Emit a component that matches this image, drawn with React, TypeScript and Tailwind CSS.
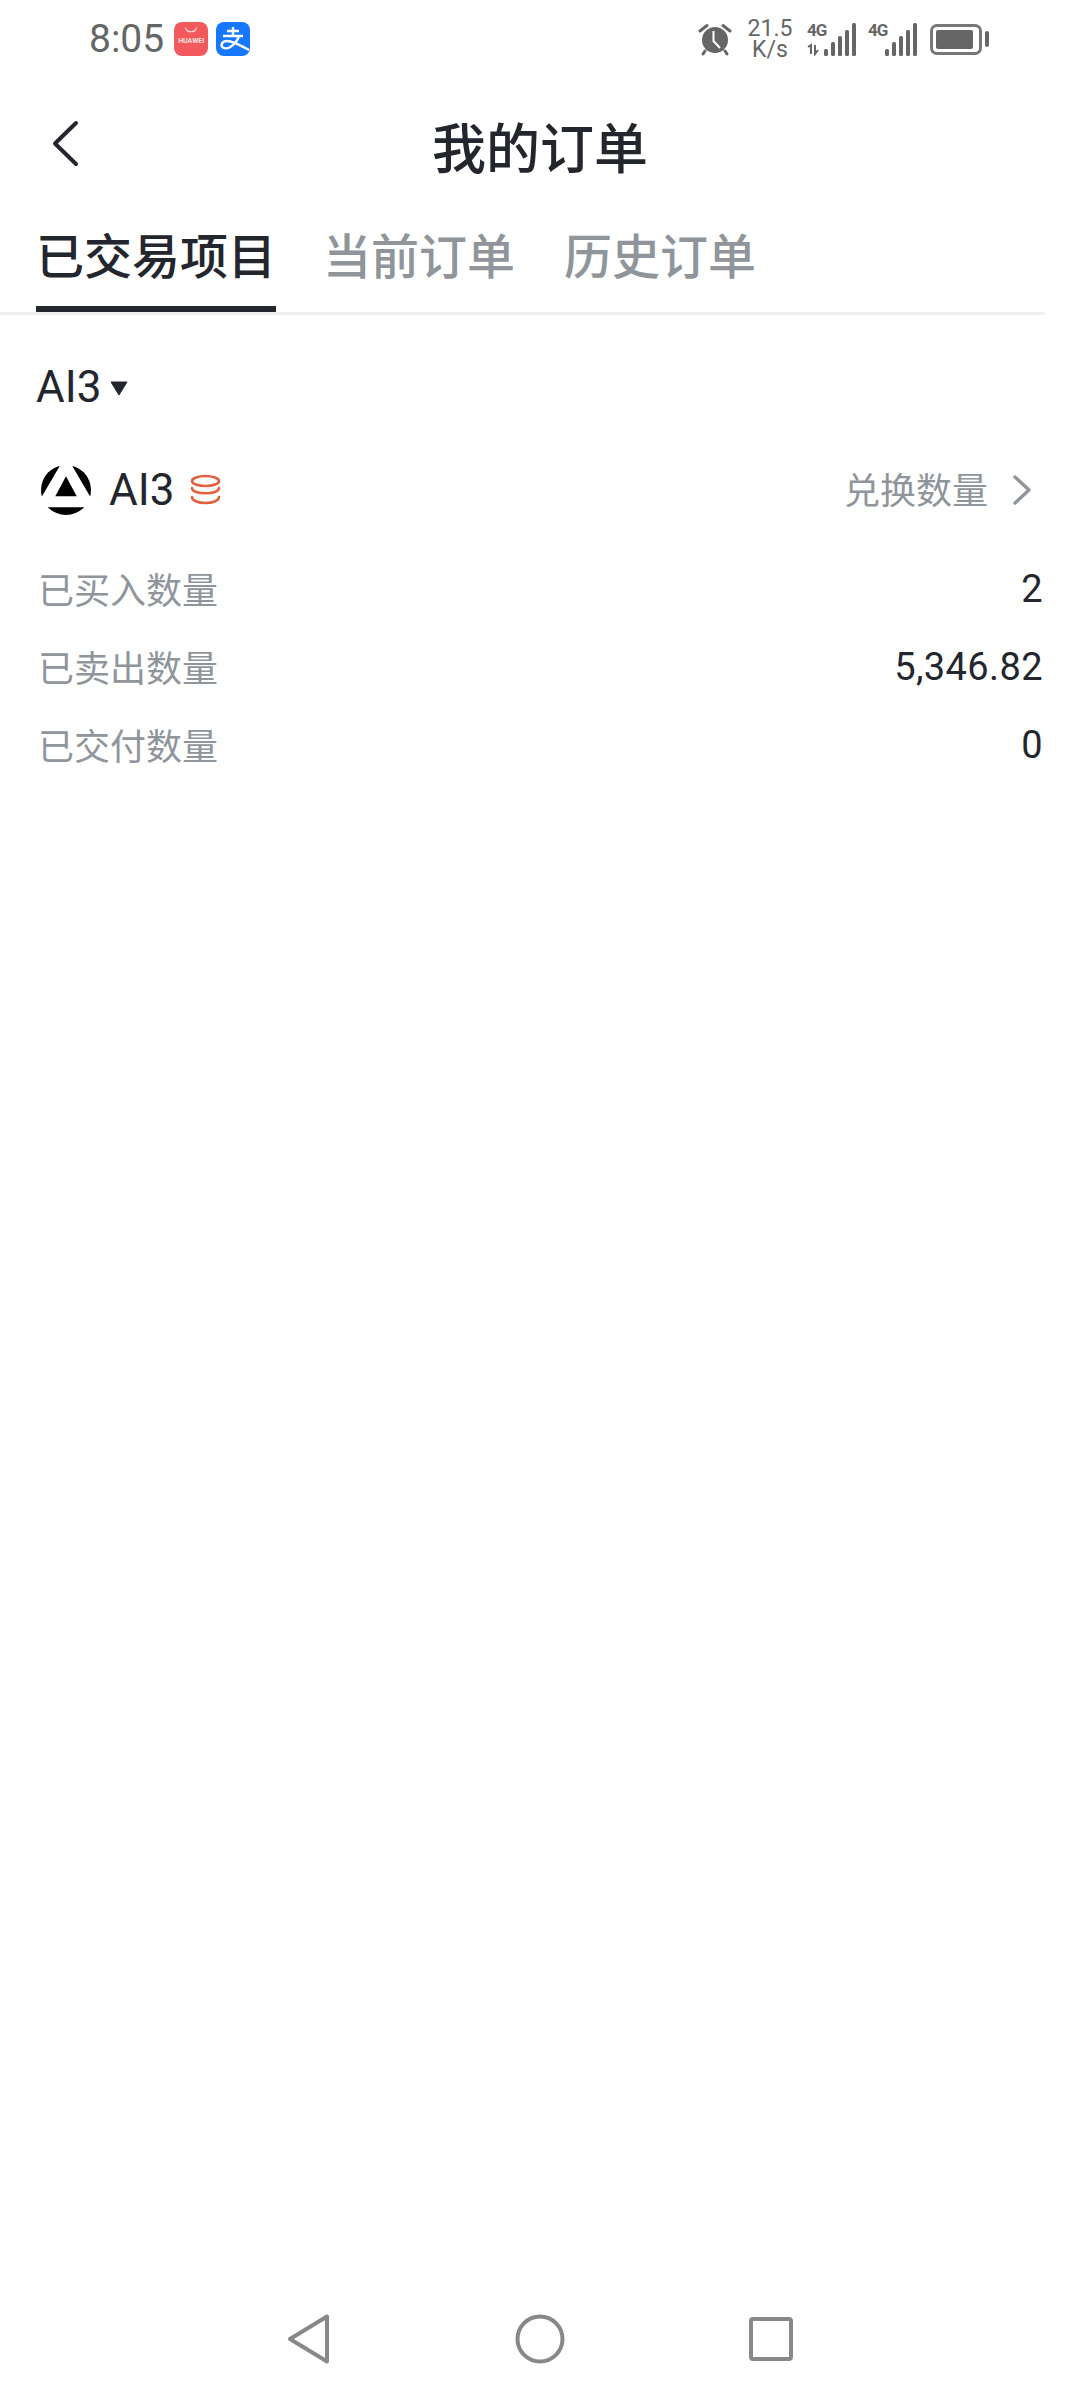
import React from "react";

const sans = "font-['Roboto','Noto_Sans_CJK_SC',sans-serif]";

const rows = [
  { label: "已买入数量", value: "2" },
  { label: "已卖出数量", value: "5,346.82" },
  { label: "已交付数量", value: "0" },
];

const HuaweiIcon = () => (
  <div className="w-[34px] h-[34px] rounded-[8px] bg-[#f2595d] flex flex-col items-center pt-[5px]">
    <svg width="14" height="7" viewBox="0 0 14 7" fill="none">
      <path d="M1.5 1C3 6 11 6 12.5 1" stroke="#ffd9d0" strokeWidth="1.2" strokeLinecap="round" />
    </svg>
    <span className="text-[7px] leading-[8px] mt-[3px] text-[#ffe3df] font-bold">HUAWEI</span>
  </div>
);

const AlipayIcon = () => (
  <svg width="34" height="34" viewBox="0 0 34 34">
    <rect width="34" height="34" rx="8" fill="#1677ff" />
    <path d="M11 9H23M17 5V14M7 14H27M23 14C21 21 13 28 8 26C3.5 24.5 5.5 19 11 19C17 19 24 23 33 28" fill="none" stroke="#fff" strokeWidth="2.4" />
  </svg>
);

const AlarmIcon = () => (
  <svg width="34" height="34" viewBox="0 0 34 34">
    <circle cx="17" cy="18" r="13" fill="#666" />
    <path d="M15.5 9V19L22 26" fill="none" stroke="#fff" strokeWidth="2" />
    <path d="M2 9L9 3.5M32 9L25 3.5M7 29L5 32M27 29L29 32" stroke="#666" strokeWidth="3" strokeLinecap="round" />
  </svg>
);

// network type label with five signal bars, the first slot shows traffic arrows when active
const SignalBars = ({ activity }: { activity?: boolean }) => (
  <div className="relative w-[50px] h-[33px] shrink-0">
    <span className="absolute left-0 top-[-2px] text-[17px] leading-[18px] font-bold tracking-[-1px] text-[#666]">4G</span>
    <svg className="absolute left-0 top-0" width="50" height="33" viewBox="0 0 50 33">
      {activity && <path d="M1 24L4 22V31M8 22V31L11 27" fill="none" stroke="#666" strokeWidth="2" />}
      <rect x="17" y="26" width="4" height="7" rx="1.5" fill="#666" />
      <rect x="24" y="19" width="4" height="14" rx="1.5" fill="#666" />
      <rect x="31" y="13" width="4" height="20" rx="1.5" fill="#666" />
      <rect x="38" y="7" width="4" height="26" rx="1.5" fill="#666" />
      <rect x="45" y="0" width="4" height="33" rx="1.5" fill="#666" />
    </svg>
  </div>
);

const Battery = () => (
  <div className="flex items-center gap-[3px]">
    <div className="w-[52px] h-[31px] rounded-[7px] border-[3px] border-[#777] p-[3px]">
      <div className="w-[37px] h-full rounded-[2px] bg-[#666]" />
    </div>
    <div className="w-[4px] h-[16px] rounded-full bg-[#666]" />
  </div>
);

const StatusBar = () => (
  <div className="h-[78px] pl-[89px] pr-[91px] flex items-center justify-between">
    <div className="flex items-center gap-[8px]">
      <span className="text-[39px] leading-[46px] text-[#666] mr-[2px]">8:05</span>
      <HuaweiIcon />
      <AlipayIcon />
    </div>
    <div className="flex items-center">
      <AlarmIcon />
      <div className="w-[46px] ml-[15px] mr-[14px] flex flex-col items-center text-[#666] text-[23px] leading-[21px]">
        <span>21.5</span>
        <span>K/s</span>
      </div>
      <SignalBars activity />
      <div className="w-[11px]" />
      <SignalBars />
      <div className="w-[12px]" />
      <Battery />
    </div>
  </div>
);

const CoinsIcon = () => (
  <svg width="31" height="32" viewBox="0 0 31 32" fill="none" stroke="#e2603f" strokeWidth="2.6" strokeLinecap="round">
    <ellipse cx="15.5" cy="7" rx="13.5" ry="5" />
    <path d="M2 14C2 21 29 21 29 14" />
    <path d="M2 23C2 31 29 31 29 23" />
  </svg>
);

const TokenLogo = () => (
  <svg width="52" height="50" viewBox="0 0 52 50">
    <circle cx="26" cy="25" r="25" fill="#000" />
    <path d="M26 -9.7L-4.5 42.3H56.5Z" fill="#fff" />
    <path d="M26 11.3L36.7 31.3H15.3Z" fill="#000" />
  </svg>
);

const App = () => {
  return (
    <div className={`w-[1080px] h-[2400px] bg-white flex flex-col ${sans}`}>
      <StatusBar />

      {/* title bar */}
      <div className="relative h-[140px] flex items-center justify-center">
        <svg className="absolute left-[50px] top-[41px]" width="30" height="48" viewBox="0 0 30 48" fill="none">
          <path d="M26 4L5 24.5L26 45" stroke="#24262e" strokeWidth="4" strokeLinecap="round" strokeLinejoin="round" />
        </svg>
        <h1 className="text-[54px] leading-[64px] font-medium text-[#24262e] mt-[5px]">我的订单</h1>
      </div>

      {/* tabs */}
      <div className="h-[97px] mr-[35px] border-b-[3px] border-[#eeeff0] flex">
        <div className="relative w-[240px] ml-[36px] text-center text-[48px] leading-[60px] font-medium text-[#24262e] pt-[10px]">
          已交易项目
          <div className="absolute left-0 right-0 bottom-0 h-[6px] bg-[#24262e]" />
        </div>
        <div className="ml-[47px] text-[48px] leading-[60px] font-medium text-[#8f959b] pt-[10px]">当前订单</div>
        <div className="ml-[49px] text-[48px] leading-[60px] font-medium text-[#8f959b] pt-[10px]">历史订单</div>
      </div>

      {/* token filter */}
      <div className="mt-[47px] pl-[36px] flex items-center">
        <span className="text-[44px] leading-[50px] text-[#24262e]">AI3</span>
        <svg className="ml-[9px] mt-[2px]" width="18" height="15" viewBox="0 0 18 15">
          <path d="M1 1H17L9 14Z" fill="#24262e" stroke="#24262e" strokeLinejoin="round" />
        </svg>
      </div>

      {/* holdings card */}
      <div className="mt-[48px] pl-[40px] pr-[48px] flex items-center justify-between h-[60px]">
        <div className="flex items-center">
          <TokenLogo />
          <span className="ml-[17px] mr-[16px] text-[44px] leading-[50px] text-[#24262e]">AI3</span>
          <CoinsIcon />
        </div>
        <div className="flex items-center">
          <span className="text-[36px] leading-[44px] text-[#8f959b] mt-[3px]">兑换数量</span>
          <svg className="ml-[24px]" width="20" height="32" viewBox="0 0 20 32" fill="none">
            <path d="M3 3L17 16L3 29" stroke="#8f959b" strokeWidth="3.4" strokeLinecap="round" strokeLinejoin="round" />
          </svg>
        </div>
      </div>

      <div className="mt-[33px] pl-[38px] pr-[37px] flex flex-col">
        {rows.map((row) => (
          <div key={row.label} className="h-[78px] flex items-center justify-between">
            <span className="text-[36px] leading-[44px] text-[#8f959b]">{row.label}</span>
            <span className="text-[38px] leading-[44px] tracking-[0.4px] text-[#24262e] mt-[-7px]">{row.value}</span>
          </div>
        ))}
      </div>

      {/* system navigation */}
      <div className="mt-auto h-[120px] flex items-start justify-center gap-[183px] pt-[33px]">
        <svg width="44" height="52" viewBox="0 0 44 52" fill="none">
          <path d="M40 3.5V48.5L3 26Z" stroke="#888" strokeWidth="4" strokeLinejoin="round" />
        </svg>
        <svg width="52" height="52" viewBox="0 0 52 52" fill="none">
          <circle cx="26" cy="26" r="22.5" stroke="#888" strokeWidth="4" />
        </svg>
        <svg width="44" height="52" viewBox="0 0 44 52" fill="none">
          <rect x="2" y="6" width="40" height="40" rx="2" stroke="#888" strokeWidth="4" />
        </svg>
      </div>
    </div>
  );
};

export default App;
